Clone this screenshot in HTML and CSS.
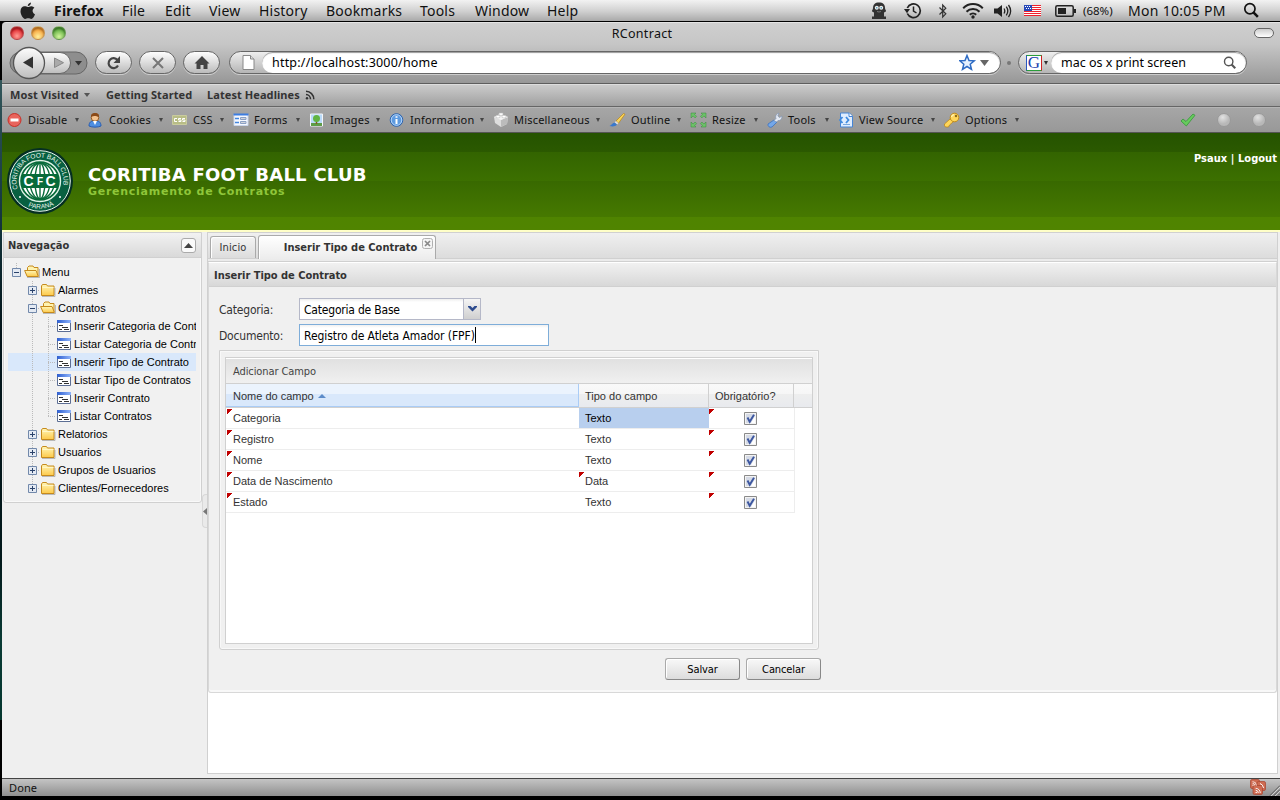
FILE: index.html
```html
<!DOCTYPE html>
<html lang="pt-BR">
<head>
<meta charset="utf-8">
<title>RContract</title>
<link rel="stylesheet" href="styles.css">
</head>
<body>
<svg class="defs" width="0" height="0" aria-hidden="true">
  <defs>
    <linearGradient id="gold" x1="0" y1="0" x2="0" y2="1"><stop offset="0" stop-color="#fff7b8"/><stop offset="1" stop-color="#fdc94a"/></linearGradient>
    <linearGradient id="silver" x1="0" y1="0" x2="0" y2="1"><stop offset="0" stop-color="#fdfdfd"/><stop offset="1" stop-color="#bdbdbd"/></linearGradient>
    <linearGradient id="bluebar" x1="0" y1="0" x2="1" y2="0"><stop offset="0" stop-color="#2f5fd0"/><stop offset="1" stop-color="#8fb4fa"/></linearGradient>
    <symbol id="folder" viewBox="0 0 16 18"><path d="M1.500 14.500V5l1-1.500h4l1 1.500h6.500v9.500z" fill="url(#gold)" stroke="#c68a1c"/><path d="M2.500 6.500h11" stroke="#fff6c8"/><path d="M2 15.500h13V7" fill="none" stroke="#8888" /></symbol>
    <symbol id="folder-open" viewBox="0 0 16 18"><path d="M3.500 13V4.500L5 3h4l1 1.500h4V13z" fill="#fff3b0" stroke="#c68a1c"/><path d="M.6 7.500h11.400l2.400 6H3.200z" fill="url(#gold)" stroke="#c68a1c"/><path d="M3 14.500h12.500V6" fill="none" stroke="#8888"/></symbol>
    <symbol id="leaf" viewBox="0 0 16 18"><path d="M1.500 3.500h13v11h-13z" fill="#fff" stroke="#5c6e94"/><path d="M1 3h14v3H1z" fill="url(#bluebar)"/><path d="M3 8.500h4M6 10.500h6M3 12.500h3M8 12.500h5" stroke="#333"/></symbol>
    <symbol id="plus" viewBox="0 0 9 9"><path d="M.5.5h8v8h-8z" fill="#e4eaf3" stroke="#7289ab"/><path d="M2 4.500h5M4.500 2v5" stroke="#2b436b"/></symbol>
    <symbol id="minus" viewBox="0 0 9 9"><path d="M.5.5h8v8h-8z" fill="#e4eaf3" stroke="#7289ab"/><path d="M2 4.500h5" stroke="#2b436b"/></symbol>
    <symbol id="check" viewBox="0 0 13 13"><path d="M.5.5h12v12H.5z" fill="#f3f3f3" stroke="#8a8a8a"/><path d="M2 2h9v9H2z" fill="#d5dae5"/><path d="M7 11h4V4z" fill="#fff"/><path d="M3.500 5.500l2.200 4.300L10 2.800" fill="none" stroke="#3d57a0" stroke-width="1.900"/></symbol>
    <symbol id="feed" viewBox="0 0 10 10"><path d="M1 1.200a8 8 0 0 1 7.800 8M1 4.500a4.700 4.700 0 0 1 4.500 4.700" fill="none" stroke="currentColor" stroke-width="1.500"/><circle cx="2" cy="8.300" r="1.200" fill="currentColor"/></symbol>
    <symbol id="lens" viewBox="0 0 16 16"><circle cx="6.500" cy="6.300" r="4.800" fill="none" stroke="currentColor" stroke-width="1.600"/><path d="M9.800 9.800l4.200 4.200" stroke="currentColor" stroke-width="2.400"/></symbol>
    <radialGradient id="ball" cx=".4" cy=".3"><stop offset="0" stop-color="#e2e2e2"/><stop offset="1" stop-color="#b8b8b8"/></radialGradient>
  </defs>
</svg>

<div class="screen">
  <header class="menubar">
    <svg class="apple" width="16" height="18" viewBox="0 0 16 18"><path d="M11 .5c.1 2-1.500 3.600-3.200 3.500C7.600 2.300 9.300.7 11 .5zM8 5c.8 0 1.800-.9 3.400-.8 1.200.1 2.300.6 3 1.600-2.700 1.700-2.200 5.300.6 6.400-.8 2.300-2.200 4.700-3.700 4.700-1.200 0-1.600-.7-3.100-.7s-1.900.7-3 .7C3 17 .5 12.600.5 9.300c0-3.300 2-5 4-5C6 4.300 7.100 5 8 5z" fill="#222"/></svg>
    <nav class="menus">
      <b class="m1">Firefox</b><span class="m2">File</span><span class="m3">Edit</span><span class="m4">View</span><span class="m5">History</span><span class="m6">Bookmarks</span><span class="m7">Tools</span><span class="m8">Window</span><span class="m9">Help</span>
    </nav>
    <div class="extras">
      <svg class="e1" width="18" height="19" viewBox="0 0 18 18"><path d="M9 1C5 1 3 3 3 6.500c0 1.500-1 2-1 3s1.500 1 2 1.500V15H2v2.500h14V15h-2v-4c.5-.5 2-.5 2-1.500s-1-1.500-1-3C15 3 13 1 9 1z" fill="#333"/><circle cx="6.800" cy="6.300" r="2" fill="#eee"/><circle cx="11.200" cy="6.300" r="2" fill="#eee"/><path d="M6.800 5.500v1.500M11.200 5.500v1.500" stroke="#28a" /><path d="M7 10q2 1 4 0" stroke="#777" fill="none"/></svg>
      <svg class="e2" width="18" height="18" viewBox="0 0 18 18"><path d="M3.300 11.500A6.800 6.800 0 1 0 3.300 6" fill="none" stroke="#222" stroke-width="1.700"/><path d="M0 7h6L3 11.300z" fill="#222"/><path d="M9.500 4.500V9l3 2" fill="none" stroke="#222" stroke-width="1.500"/></svg>
      <svg class="e3" width="10" height="16" viewBox="0 0 10 16"><path d="M1.500 4.500l6.300 6.300L4.700 14V2l3.100 3.200-6.300 6.300" fill="none" stroke="#333" stroke-width="1.200"/></svg>
      <svg class="e4" width="22" height="17" viewBox="0 0 22 17"><path d="M1.200 6.200a13.800 13.800 0 0 1 19.600 0M4.500 9.700a9.200 9.200 0 0 1 13 0M7.800 12.800a4.600 4.600 0 0 1 6.400 0" fill="none" stroke="#222" stroke-width="2"/><circle cx="11" cy="15" r="1.700" fill="#222"/></svg>
      <svg class="e5" width="18" height="14" viewBox="0 0 18 14"><path d="M0 4.500h3.500L8 1v12L3.500 9.500H0z" fill="#222"/><path d="M10 4.500q1.600 2.500 0 5M12.300 2.700q3 4.300 0 8.600M14.500 1q4.300 6 0 12" fill="none" stroke="#222" stroke-width="1.300"/></svg>
      <svg class="e6" width="17" height="11" viewBox="0 0 17 11" shape-rendering="crispEdges"><path d="M0 0h17v11H0z" fill="#fff"/><path d="M0 0h17v1H0zM0 2h17v1H0zM0 4h17v1H0zM0 6h17v1H0zM0 8h17v1H0zM0 10h17v1H0z" fill="#f0202c"/><path d="M0 0h8v6H0z" fill="#2648b8"/><path d="M1 1h1v1H1zM3 1h1v1H3zM5 1h1v1H5zM2 3h1v1H2zM4 3h1v1H4zM6 3h1v1H6z" fill="#fff"/></svg>
      <svg class="e7" width="21" height="12" viewBox="0 0 21 12"><rect x=".8" y=".8" width="17.400" height="10.400" rx="1.500" fill="none" stroke="#222" stroke-width="1.500"/><path d="M3 3h8v6H3z" fill="#222"/><path d="M20 4v4" stroke="#222" stroke-width="2"/></svg>
      <span class="pct">(68%)</span>
      <span class="clock">Mon 10:05 PM</span>
      <svg class="e8" width="17" height="17"><use href="#lens"/></svg>
    </div>
  </header>

  <div class="window">
    <div class="chrome">
      <div class="titlebar">
        <div class="lights"><i class="red"></i><i class="amber"></i><i class="green"></i></div>
        <div class="title">RContract</div>
        <i class="pill"></i>
      </div>
      <div class="navbar">
        <svg class="keyhole" width="80" height="34" viewBox="0 0 80 34">
          <rect x="1" y="6" width="77" height="22" rx="11" fill="#8e8e8e" stroke="#666"/>
          <path d="M20 6.500h31a10.500 10.500 0 0 1 0 21H20z" fill="url(#silver)" stroke="#666"/>
          <circle cx="20" cy="17" r="15.500" fill="url(#silver)" stroke="#555" stroke-width="1.300"/>
          <path d="M14 16.500l10-6v12z" fill="#333"/><path d="M45.500 12v9.500l9-4.800z" fill="#aaa" stroke="#888"/><path d="M66 15h7l-3.500 4.500z" fill="#333"/>
        </svg>
        <span class="btn"><svg width="16" height="16" viewBox="0 0 16 16"><path d="M12 10.500A5 5 0 1 1 11.500 5" fill="none" stroke="#444" stroke-width="2.200"/><path d="M14 1v7H7.500z" fill="#444"/></svg></span>
        <span class="btn"><svg width="16" height="16" viewBox="0 0 16 16"><path d="M3 3l10 10M13 3L3 13" stroke="#777" stroke-width="2"/></svg></span>
        <span class="btn"><svg width="16" height="16" viewBox="0 0 16 16"><path d="M8 1L.5 8.500h2V14h4v-4h3v4h4V8.500h2z" fill="#444"/></svg></span>
        <div class="url">
          <span class="page"><svg width="13" height="15" viewBox="0 0 13 15"><path d="M1 .5h7.500L12 4v10.500H1z" fill="#fff" stroke="#888"/><path d="M8.500.5V4H12" fill="#ddd" stroke="#888"/></svg></span>
          <span class="field"><span class="address">http://localhost:3000/home</span>
            <svg width="32" height="17" viewBox="0 0 32 17"><path d="M8 1.500l2 5 5.200.3-4 3.400 1.300 5.100L8 12.500l-4.500 2.800 1.300-5.100-4-3.400L6 6.500z" fill="#e5f1ff" stroke="#2f6cc4" stroke-width="1.500"/><path d="M21 6h9l-4.500 6z" fill="#666"/></svg></span>
        </div>
        <i class="dot"></i>
        <div class="search">
          <span class="engine"><b>G</b><i class="caret"></i></span>
          <span class="field"><span class="query">mac os x print screen</span><svg width="14" height="14" viewBox="0 0 16 16"><use href="#lens"/></svg></span>
        </div>
      </div>
    </div>
    <div class="bookmarks">
      <span class="bk1">Most Visited</span><i class="caret wide"></i><span class="bk2">Getting Started</span><span class="bk3">Latest Headlines</span><svg width="10" height="10"><use href="#feed"/></svg>
    </div>
    <div class="devbar">
      <div class="dev d1"><svg width="16" height="16" viewBox="0 0 16 16"><circle cx="7.500" cy="8" r="6.500" fill="#e8645c" stroke="#c93028"/><path d="M3.500 6.500h8v3h-8z" fill="#fff"/></svg><span>Disable</span><i class="caret"></i></div>
      <div class="dev d2"><svg width="16" height="16" viewBox="0 0 16 16"><path d="M1 14c0-4 2.500-5.500 6-5.500s6 1.500 6 5.500c-3 1.500-9 1.500-12 0z" fill="#4e8ee0" stroke="#2a5db0"/><circle cx="7" cy="5.500" r="3.800" fill="#f3c28e" stroke="#935a20"/><path d="M3 5C2.500 2 5 .5 7.500 1 10 .5 11.500 3 11 5 9 4.500 8 4 7 4S4.500 4 3 5z" fill="#8a4a18"/><path d="M5 9l2 4 2-4z" fill="#fff"/></svg><span>Cookies</span><i class="caret"></i></div>
      <div class="dev d3"><svg width="16" height="16" viewBox="0 0 16 16"><path d="M.5 3.500h14v9H.5z" fill="#b8bd86" stroke="#c9cb9e"/><path d="M5 6.500H2.500v3H5M9 6.500H6.500v1.500H9v1.500H6.500M13 6.500h-2.500v1.500H13v1.500h-2.500" fill="none" stroke="#fff"/></svg><span>CSS</span><i class="caret"></i></div>
      <div class="dev d4"><svg width="16" height="16" viewBox="0 0 16 16"><path d="M1 2.500h14v11H1z" fill="#f5f8ff" stroke="#c8d4ea"/><path d="M.5 2.500h15" stroke="#3c7de0" stroke-width="2"/><path d="M2 6.500h4M2 10.500h4" stroke="#4386df" stroke-width="1.500"/><path d="M7.500 5.500H13v2H7.500zM7.500 9.500H13v2H7.500z" fill="#d0d4dc" stroke="#8ba0c4"/></svg><span>Forms</span><i class="caret"></i></div>
      <div class="dev d5"><svg width="16" height="16" viewBox="0 0 16 16"><path d="M1.500 2h12v12h-12z" fill="#b9daf9" stroke="#f4f6fa"/><path d="M2 11h11v3H2z" fill="#5e9c46"/><path d="M7.500 8v4" stroke="#845820" stroke-width="1.500"/><circle cx="7.500" cy="6.500" r="3.500" fill="#61b442"/></svg><span>Images</span><i class="caret"></i></div>
      <div class="dev d6"><svg width="16" height="16" viewBox="0 0 16 16"><circle cx="7.500" cy="8" r="6.300" fill="#5d9ae0" stroke="#2b62ae"/><circle cx="7.500" cy="8" r="5.300" fill="none" stroke="#b5d5f8"/><path d="M7.500 7v5M7.500 4.300v1.500" stroke="#fff" stroke-width="2"/></svg><span>Information</span><i class="caret"></i></div>
      <div class="dev d7"><svg width="16" height="16" viewBox="0 0 16 16"><path d="M1 5l6-3 8 3-1 7-6 3-6-4z" fill="#ddd"/><path d="M8 8l7-3-1 7-6 3z" fill="#bbb"/><path d="M1 5l7 3 7-3-8-3z" fill="#f4f4f4"/><path d="M3 3.500v2l2 .5 2-.5v-2zM9 3.500v2l2 .5 2-.5v-2zM6 1v2l2 .5L10 3V1z" fill="#fff" stroke="#bbb" stroke-width=".6"/></svg><span>Miscellaneous</span><i class="caret"></i></div>
      <div class="dev d8"><svg width="17" height="16" viewBox="0 0 17 16"><path d="M7 9l7.500-7.500 1.500.7-6.500 9z" fill="#f8d45b" stroke="#b98312" stroke-width=".7"/><path d="M7 9l2.500 2.200L8 12.500 5.500 10.500z" fill="#ddd"/><path d="M5.500 10.500L8 12.600C6 15 3 14.500.5 14c2-.5 2.500-3 5-3.500z" fill="#3978cd"/></svg><span>Outline</span><i class="caret"></i></div>
      <div class="dev d9"><svg width="17" height="16" viewBox="0 0 17 16"><path d="M1 1h5L4.600 2.400l2 2-1.500 1.500-2-2L1 6zM16 1h-5l1.400 1.400-2 2 1.500 1.500 2-2L16 6zM1 15h5l-1.400-1.400 2-2L5.100 10l-2 2L1 10zM16 15h-5l1.400-1.400-2-2 1.500-1.600 2 2L16 10z" fill="#6cc268" stroke="#388a3c" stroke-width=".5"/></svg><span>Resize</span><i class="caret"></i></div>
      <div class="dev d10"><svg width="16" height="16" viewBox="0 0 16 16"><path d="M7 8l3 2-5 5c-2 1-4.500-.5-4-3z" fill="#74a7e8" stroke="#3d72be" stroke-width=".8"/><path d="M7 8.500l2-2C8 4 9.500 1.500 12 1.200L10.800 4l1.700 1.500L15 4c.3 3-2 5-4 4.500L9.500 10z" fill="#e4e9f2" stroke="#8094b2" stroke-width=".7"/></svg><span>Tools</span><i class="caret"></i></div>
      <div class="dev d11"><svg width="16" height="16" viewBox="0 0 16 16"><path d="M2.500 1h9L14.500 4v11h-12z" fill="#dfedff" stroke="#4585d6"/><path d="M11 1v3.500h3.500" fill="#fff" stroke="#4585d6"/><path d="M4.500 5L2 8l2.500 3M8 5l2.500 3L8 11" fill="none" stroke="#3f8be0" stroke-width="1.800"/><path d="M5 12.500h7" stroke="#77a7df"/></svg><span>View Source</span><i class="caret"></i></div>
      <div class="dev d12"><svg width="16" height="16" viewBox="0 0 16 16"><path d="M8 8l1.500 1.500-4 3.500-1 2H1.500l-1-1.500V12L6 7z" fill="#ffd65a" stroke="#bb820f" stroke-width=".7"/><circle cx="10.500" cy="5.500" r="4.300" fill="#ffd65a" stroke="#c08a1c"/><circle cx="12" cy="4" r="1.200" fill="#8b6a1c"/><path d="M7.500 5a3 3 0 0 1 2.500-2.300" stroke="#fff6bd" fill="none" stroke-width="1.300"/></svg><span>Options</span><i class="caret"></i></div>
      <div class="status-icons">
        <svg width="16" height="14" viewBox="0 0 16 14"><path d="M1 8l2-2 3 2.500L13 1l2 1.300L6.300 13z" fill="#67cb5d" stroke="#35973a" stroke-width=".8"/></svg>
        <svg width="14" height="14"><circle cx="7" cy="7" r="6.500" fill="url(#ball)" stroke="#999"/></svg>
        <svg width="14" height="14"><circle cx="7" cy="7" r="6.500" fill="url(#ball)" stroke="#999"/></svg>
      </div>
    </div>

    <div class="brand">
      <svg class="logo" width="66" height="66" viewBox="0 0 66 66">
        <defs><path id="arc-top" d="M10.900 41A23.500 23.500 0 1 1 55.100 41"/><path id="arc-bottom" d="M18.500 56.700A27.800 27.800 0 0 0 47.500 56.700"/>
        <clipPath id="globe"><path d="M0 0h66v26H0zM0 40h66v26H0z"/></clipPath></defs>
        <circle cx="33" cy="33" r="33" fill="#052f22"/><circle cx="33" cy="33" r="30.300" fill="#086041" stroke="#e9f5ee" stroke-width="1"/>
        <circle cx="33" cy="33" r="20.500" fill="#076b3a" stroke="#dff2e6" stroke-width="1.400"/>
        <g clip-path="url(#globe)"><circle cx="33" cy="33" r="18" fill="#fff"/><g fill="none" stroke="#076b3a" stroke-width="1.400"><path d="M33 14v38"/><ellipse cx="33" cy="33" rx="5" ry="18"/><ellipse cx="33" cy="33" rx="10" ry="18"/><ellipse cx="33" cy="33" rx="14.500" ry="18"/></g></g>
        <text x="16.500" y="38" class="cfc">C</text><text x="29.900" y="36.800" class="cfc small">F</text><text x="38.500" y="38" class="cfc">C</text>
        <text class="ring" textLength="86"><textPath href="#arc-top">CORITIBA FOOT BALL CLUB</textPath></text>
        <text class="ring"><textPath href="#arc-bottom" startOffset="3">PARANÁ</textPath></text>
        <circle cx="13" cy="49" r="1" fill="#fff"/><circle cx="53" cy="49" r="1" fill="#fff"/>
      </svg>
      <div class="names"><div class="club">CORITIBA FOOT BALL CLUB</div><div class="sub">Gerenciamento de Contratos</div></div>
      <div class="user">Psaux | Logout</div>
    </div>

    <main class="workspace">
      <aside class="side">
        <section class="nav-panel">
          <div class="panel-head"><span>Navegação</span><i class="collapse"><svg width="9" height="5"><path d="M0 5l4.500-5L9 5z" fill="#444"/></svg></i></div>
          <ul class="tree">
            <li><i class="cell half"><svg width="9" height="9"><use href="#minus"/></svg></i><svg width="16" height="18"><use href="#folder-open"/></svg><span>Menu</span></li>
            <li><i class="cell"></i><i class="cell line elbow"><svg width="9" height="9"><use href="#plus"/></svg></i><svg width="16" height="18"><use href="#folder"/></svg><span>Alarmes</span></li>
            <li><i class="cell"></i><i class="cell line elbow"><svg width="9" height="9"><use href="#minus"/></svg></i><svg width="16" height="18"><use href="#folder-open"/></svg><span>Contratos</span></li>
            <li><i class="cell"></i><i class="cell line"></i><i class="cell line elbow"></i><svg width="16" height="18"><use href="#leaf"/></svg><span>Inserir Categoria de Contrato</span></li>
            <li><i class="cell"></i><i class="cell line"></i><i class="cell line elbow"></i><svg width="16" height="18"><use href="#leaf"/></svg><span>Listar Categoria de Contratos</span></li>
            <li class="selected"><i class="cell"></i><i class="cell line"></i><i class="cell line elbow"></i><svg width="16" height="18"><use href="#leaf"/></svg><span>Inserir Tipo de Contrato</span></li>
            <li><i class="cell"></i><i class="cell line"></i><i class="cell line elbow"></i><svg width="16" height="18"><use href="#leaf"/></svg><span>Listar Tipo de Contratos</span></li>
            <li><i class="cell"></i><i class="cell line"></i><i class="cell line elbow"></i><svg width="16" height="18"><use href="#leaf"/></svg><span>Inserir Contrato</span></li>
            <li><i class="cell"></i><i class="cell line"></i><i class="cell half elbow"></i><svg width="16" height="18"><use href="#leaf"/></svg><span>Listar Contratos</span></li>
            <li><i class="cell"></i><i class="cell line elbow"><svg width="9" height="9"><use href="#plus"/></svg></i><svg width="16" height="18"><use href="#folder"/></svg><span>Relatorios</span></li>
            <li><i class="cell"></i><i class="cell line elbow"><svg width="9" height="9"><use href="#plus"/></svg></i><svg width="16" height="18"><use href="#folder"/></svg><span>Usuarios</span></li>
            <li><i class="cell"></i><i class="cell line elbow"><svg width="9" height="9"><use href="#plus"/></svg></i><svg width="16" height="18"><use href="#folder"/></svg><span>Grupos de Usuarios</span></li>
            <li><i class="cell"></i><i class="cell half elbow"><svg width="9" height="9"><use href="#plus"/></svg></i><svg width="16" height="18"><use href="#folder"/></svg><span>Clientes/Fornecedores</span></li>
          </ul>
        </section>
      </aside>
      <div class="splitter"><i class="grip"><svg width="4" height="7"><path d="M4 0v7L0 3.500z" fill="#777"/></svg></i></div>
      <section class="tabs">
        <div class="strip">
          <div class="tab idle">Inicio</div>
          <div class="tab active"><span>Inserir Tipo de Contrato</span><svg class="close" width="11" height="11" viewBox="0 0 11 11"><rect x=".5" y=".5" width="10" height="10" rx="2" fill="#f4f4f4" stroke="#b0b0b0"/><path d="M3 3l5 5M8 3L3 8" stroke="#888" stroke-width="1.700"/></svg></div>
        </div>
        <div class="spacer"></div>
        <div class="content">
          <div class="content-head">Inserir Tipo de Contrato</div>
          <form class="form">
            <div class="row"><label>Categoria:</label><div class="combo"><span>Categoria de Base</span><i><svg width="9" height="6" viewBox="0 0 9 6"><path d="M0 0h2.500l2 2 2-2H9v1L4.500 5.500 0 1z" fill="#2d4b8e"/></svg></i></div></div>
            <div class="row"><label>Documento:</label><div class="input"><span>Registro de Atleta Amador (FPF)</span><i></i></div></div>
            <div class="frame">
              <div class="grid">
                <div class="toolbar">Adicionar Campo</div>
                <div class="grid-head"><div class="c1">Nome do campo<svg width="8" height="4"><path d="M0 4l4-4 4 4z" fill="#5d8cc9"/></svg></div><div class="c2">Tipo do campo</div><div class="c3">Obrigatório?</div><div class="c4"></div></div>
                <div class="record"><div class="c1 dirty">Categoria</div><div class="c2 picked">Texto</div><div class="c3 dirty"><svg width="13" height="13"><use href="#check"/></svg></div></div>
                <div class="record"><div class="c1 dirty">Registro</div><div class="c2">Texto</div><div class="c3 dirty"><svg width="13" height="13"><use href="#check"/></svg></div></div>
                <div class="record"><div class="c1 dirty">Nome</div><div class="c2">Texto</div><div class="c3 dirty"><svg width="13" height="13"><use href="#check"/></svg></div></div>
                <div class="record"><div class="c1 dirty">Data de Nascimento</div><div class="c2 dirty">Data</div><div class="c3 dirty"><svg width="13" height="13"><use href="#check"/></svg></div></div>
                <div class="record"><div class="c1 dirty">Estado</div><div class="c2">Texto</div><div class="c3 dirty"><svg width="13" height="13"><use href="#check"/></svg></div></div>
              </div>
            </div>
            <div class="actions"><button type="button">Salvar</button><button type="button">Cancelar</button></div>
          </form>
        </div>
      </section>
    </main>
    <footer class="statusbar"><span>Done</span>
      <svg width="32" height="17" viewBox="0 0 32 17"><g stroke="#a8442e" stroke-width=".7"><rect x="2.500" y=".5" width="9" height="9" rx="1.500" fill="#cf6c52"/><rect x="9" y="2.500" width="8.500" height="9" rx="1.500" fill="#cf6c52"/><rect x="5" y="6.500" width="9.500" height="9" rx="1.500" fill="#cf6c52"/></g><g color="#fff"><use href="#feed" x="4" y="2" width="5" height="5"/><use href="#feed" x="7" y="8.500" width="6" height="6"/></g><path d="M12 4.500q3 1 3.500 4.500" stroke="#fff" fill="none"/><path d="M22 16.500L32 6.500M26 16.500l6-6M30 16.500l2-2" stroke="#555"/><path d="M23 17L32 8M27 17l5-5" stroke="#ddd" stroke-width=".8"/></svg>
    </footer>
  </div>
</div>
</body>
</html>
```
FILE: styles.css
```css
* { box-sizing: border-box; }
body { margin: 0; background: #000; overflow: hidden; }
.defs { position: absolute; }
svg { display: block; flex: none; }
i { font-style: normal; }

.screen {
  width: 1280px; height: 800px; display: flex; flex-direction: column;
  background: linear-gradient(#000 80px, #32565a 80px, #173b42 200px, #04151b 330px, #03191b 560px, #0a3b35 640px, #05372f 720px, #000 720px);
  font-family: "Noto Sans", "Open Sans", sans-serif; color: #111; white-space: nowrap;
}

/* system menu bar */
.menubar { height: 22px; display: flex; align-items: center; border-bottom: 1px solid #000; background: linear-gradient(#f2f2f2, #cfcfcf 55%, #a9a9a9); font-size: 14px; line-height: 21px; }
.apple { margin-left: 20px; }
.menus { display: flex; margin-left: 18px; width: 800px; }
.m1 { width: 68px; } .m2 { width: 43px; } .m3 { width: 44px; } .m4 { width: 50px; } .m5 { width: 67px; } .m6 { width: 94px; } .m7 { width: 55px; } .m8 { width: 72px; }
.m1 { letter-spacing: .2px; }
.menus span { letter-spacing: .2px; }
.extras { display: flex; align-items: center; margin-left: 16px; height: 21px; }
.e2 { margin-left: 16px; } .e3 { margin-left: 16px; } .e4 { margin-left: 14px; } .e5 { margin-left: 10px; } .e6 { margin-left: 12px; } .e7 { margin-left: 14px; }
.pct { width: 45px; margin-left: 7px; font-size: 11.500px; }
.clock { width: 115px; letter-spacing: .3px; }

.window { flex: none; height: 774px; margin-left: 2px; display: flex; flex-direction: column; }
.chrome { height: 62px; background: linear-gradient(#cfcfcf, #c6c6c6 35%, #979797); border-top: 1px solid #e4e4e4; border-bottom: 1px solid #5e5e5e; border-top-left-radius: 4px; }
.titlebar { height: 20px; display: flex; align-items: center; justify-content: space-between; padding: 0 6px 0 8px; }
.lights { display: flex; gap: 7px; width: 80px; }
.lights i { width: 14px; height: 14px; border-radius: 50%; border: 1px solid #6665; box-shadow: inset 0 2px 2px #0005; }
.red { background: radial-gradient(circle at 50% 75%, #ff9d94, #e3292f 65%); }
.amber { background: radial-gradient(circle at 50% 80%, #ffef9b, #f59a31 70%); }
.green { background: radial-gradient(circle at 50% 80%, #d2f59b, #57a93a 70%); }
.title { font-size: 12.500px; letter-spacing: .3px; }
.pill { width: 20px; height: 10px; border: 1px solid #666; border-radius: 5px; background: linear-gradient(#ccc, #fff); margin-left: 60px; }

.navbar { height: 39px; display: flex; align-items: center; padding-left: 7px; }
.keyhole { margin-right: 6px; }
.btn { width: 37px; height: 23px; margin-right: 7px; display: flex; align-items: center; justify-content: center; border: 1px solid #666; border-radius: 12px; background: linear-gradient(#fefefe, #bbb); box-shadow: 0 1px 0 #ccc; }
.url, .search { height: 23px; display: flex; border: 1px solid #666; border-radius: 12px; background: linear-gradient(#eee, #b5b5b5); box-shadow: 0 1px 0 #ccc; overflow: hidden; }
.url { width: 772px; margin-left: 2px; }
.page { width: 32px; padding: 3px 0 0 12px; }
.field { flex: 1; display: flex; align-items: center; justify-content: space-between; background: #fff; border-radius: 11px; padding: 0 9px 0 10px; font-size: 12.500px; color: #000; box-shadow: inset 0 1px 1px #999; }
.address { letter-spacing: .2px; }
.dot { width: 4px; height: 4px; border-radius: 2px; background: #777; margin: 0 7px 0 6px; }
.search { width: 229px; }
.search svg { color: #555; }
.engine { width: 32px; display: flex; align-items: center; padding-left: 7px; gap: 2px; }
.engine b { width: 16px; height: 16px; border: 1px solid #2a9d3a; border-left-color: #2a55c0; border-right-color: #c22; background: #fff; color: #1b3fae; font: 17px/14px "Liberation Serif", serif; text-align: center; }
.caret { border: 2.500px solid transparent; border-top: 4px solid #333; border-bottom: 0; }
.caret.wide { border-width: 4px 3.500px 0; border-top-color: #555; margin: 0 16px 0 0; }

.bookmarks { height: 23px; display: flex; align-items: center; padding: 0 0 2px 8px; border-top: 1px solid #ddd; border-bottom: 1px solid #666; background: linear-gradient(#cbcbcb, #a0a0a0); font-size: 11px; font-weight: 700; color: #333; letter-spacing: .08px; }
.bk1 { width: 74px; } .bk2 { width: 101px; } .bk3 { width: 98px; }

.devbar { height: 26px; display: flex; align-items: center; padding-left: 5px; background: linear-gradient(#a6a6a6, #989898); border-top: 1px solid #b5b5b5; border-bottom: 1px solid #555; font-size: 11px; letter-spacing: .2px; }
.dev { display: flex; align-items: center; gap: 5px; padding-right: 9px; }
.dev span { margin-top: -2px; }
.dev .caret { margin-left: auto; border-top-color: #444; }
.d1 { width: 81px; } .d2 { width: 84px; } .d3 { width: 61px; } .d4 { width: 76px; } .d5 { width: 80px; } .d6 { width: 104px; } .d7 { width: 116px; } .d8 { width: 81px; } .d9 { width: 77px; } .d10 { width: 71px; } .d11 { width: 106px; } .d12 { width: 84px; }
.status-icons { display: flex; align-items: center; margin-left: auto; padding-right: 14px; gap: 21px; }

/* application header */
.brand { height: 99px; display: flex; align-items: flex-start; border-bottom: 2px solid #ffffc8; padding: 0 3px 0 5px; font-family: "DejaVu Sans", sans-serif; font-weight: 700; color: #fff; background: linear-gradient(#255300, #2b5900 19px, #336400 19px, #3c7000 48px, #386900 48px, #467900 84px, #4f8400 84px, #508400); }
.logo { margin-top: 15px; }
.cfc { font: 700 14px "Liberation Sans", sans-serif; fill: #fff; }
.cfc.small { font-size: 10px; }
.ring { font: 6.600px "Liberation Sans", sans-serif; fill: #e6f5eb; }
.names { margin: 32px 0 0 15px; }
.club { font-size: 18px; line-height: 20px; letter-spacing: .27px; }
.sub { font-size: 11px; line-height: 13px; letter-spacing: .73px; color: #8fc63a; }
.user { margin: 18px 0 0 auto; font: 700 11px/15px "DejaVu Sans Condensed", "DejaVu Sans", sans-serif; letter-spacing: .05px; }

/* workspace */
.workspace { flex: 1; display: flex; background: #efefef; font-family: "Liberation Sans", Arial, sans-serif; font-size: 11px; }
.side { width: 200px; padding-left: 1px; }
.nav-panel { height: 271px; border: 1px solid #d0d0d0; border-radius: 0 0 3px 3px; background: #f1f1f1; box-shadow: inset 0 0 0 1px #f9f9f9; }
.panel-head { height: 25px; display: flex; align-items: center; justify-content: space-between; padding: 0 5px 0 4px; border-bottom: 1px solid #d0d0d0; background: linear-gradient(#f2f2f2, #d9d9d9); font: 700 11px "DejaVu Sans Condensed", "DejaVu Sans", sans-serif; color: #333; }
.collapse { width: 15px; height: 15px; border: 1px solid #aaa; border-radius: 3px; background: #fafafa; display: flex; align-items: center; justify-content: center; }
.tree { list-style: none; margin: 5px 5px 0 4px; padding: 0; overflow: hidden; color: #000; }
.tree li { height: 18px; display: flex; align-items: center; }
.tree span { margin-left: 2px; }
.tree .selected { background: #d9e8fb; }
.cell { flex: none; width: 16px; height: 18px; display: flex; align-items: center; justify-content: center; background-repeat: no-repeat; padding-left: 1px; }
.line { background-image: repeating-linear-gradient(#bbb 0 1px, transparent 1px 2px); background-size: 1px 18px; background-position: 8px 0; }
.half { background-image: repeating-linear-gradient(#bbb 0 1px, transparent 1px 2px); background-size: 1px 9px; background-position: 8px 0; }
.line.elbow { background-image: repeating-linear-gradient(#bbb 0 1px, transparent 1px 2px), repeating-linear-gradient(90deg, #bbb 0 1px, transparent 1px 2px); background-size: 1px 18px, 8px 1px; background-position: 8px 0, 8px 9px; }
.half.elbow { background-image: repeating-linear-gradient(#bbb 0 1px, transparent 1px 2px), repeating-linear-gradient(90deg, #bbb 0 1px, transparent 1px 2px); background-size: 1px 9px, 8px 1px; background-position: 8px 0, 8px 9px; }
.splitter { width: 5px; padding-top: 262px; }
.grip { display: flex; align-items: center; height: 34px; padding-left: 0; border: 1px solid #d8d8d8; border-right: 0; border-radius: 4px 0 0 4px; background: #eaeaea; }

.tabs { width: 1071px; height: 542px; border: 1px solid #d0d0d0; background: #fff; font-family: "DejaVu Sans Condensed", "DejaVu Sans", sans-serif; color: #333; }
.strip { height: 26px; display: flex; align-items: flex-end; gap: 2px; padding-left: 2px; border-bottom: 1px solid #d0d0d0; background: linear-gradient(#f0f0f0, #dcdcdc); }
.tab { border: 1px solid #aaa; border-bottom: 0; border-radius: 3px 3px 0 0; box-shadow: inset 1px 1px 0 #fff; text-align: center; }
.idle { width: 46px; height: 22px; line-height: 21px; letter-spacing: .15px; background: linear-gradient(#f4f4f4, #dcdcdc); }
.active { position: relative; width: 178px; height: 24px; margin-bottom: -1px; line-height: 23px; background: linear-gradient(#fff, #ececec); font-weight: 700; padding-left: 7px; }
.close { position: absolute; right: 2px; top: 2px; }
.spacer { height: 3px; background: #ebebeb; border-bottom: 1px solid #d0d0d0; }
.content { height: 431px; border: 1px solid #d8d8d8; border-top-color: #fff; border-radius: 0 0 3px 3px; background: #f0f0f0; box-shadow: inset 0 -2px 0 #f8f8f8; }
.content-head { height: 24px; padding-left: 5px; line-height: 25px; font-weight: 700; letter-spacing: -.03px; border-bottom: 1px solid #d0d0d0; background: linear-gradient(#f1f1f1, #d8d8d8); }
.form { padding: 11px 0 0 10px; }
.row { height: 22px; display: flex; align-items: center; margin-bottom: 4px; font-size: 12px; letter-spacing: -.2px; }
.row label { width: 80px; padding-top: 2px; }
.combo { width: 182px; height: 22px; display: flex; border: 1px solid #b5b8c8; background: linear-gradient(#eee, #fff 3px); color: #000; }
.combo span { flex: 1; padding: 1px 0 0 4px; line-height: 21px; }
.combo i { width: 17px; border-left: 1px solid #b5b8c8; background: linear-gradient(#f5f5f5, #cfcfcf); display: flex; align-items: center; justify-content: center; }
.input { width: 250px; height: 22px; display: flex; align-items: center; padding-left: 4px; border: 1px solid #7eadd9; background: linear-gradient(#f0f0f0, #fff 3px); color: #000; letter-spacing: -.07px; }
.input span { padding-top: 1px; }
.input i { width: 1px; height: 16px; background: #000; }
.frame { width: 600px; height: 300px; padding: 6px 5px 5px; border: 1px solid #d0d0d0; border-radius: 0 0 3px 3px; box-shadow: inset 0 0 0 1px #f8f8f8; }
.grid { width: 588px; height: 287px; border: 1px solid #d0d0d0; background: #fff; font-family: "Liberation Sans", Arial, sans-serif; font-size: 11px; }
.toolbar { height: 26px; padding-left: 7px; line-height: 28px; letter-spacing: -.1px; border-bottom: 1px solid #d0d0d0; box-shadow: inset 0 1px 0 #fff; background: linear-gradient(#e0e0e0, #f0f0f0); font-family: "DejaVu Sans Condensed", "DejaVu Sans", sans-serif; color: #444; }
.grid-head { height: 24px; display: flex; line-height: 24px; border-bottom: 1px solid #d0d0d0; background: linear-gradient(#f9f9f9, #f6f6f6 10px, #eee 10px, #e8eaee); }
.grid-head > div { border-right: 1px solid #d0d0d0; padding-left: 6px; }
.c1 { width: 353px; } .c2 { width: 130px; } .c3 { width: 85px; }
.grid-head .c1 { display: flex; align-items: center; gap: 4px; padding: 1px 0 0 7px; border-right-color: #aaccf6; border-bottom: 1px solid #aaccf6; background: linear-gradient(#ebf3fd 10px, #d9e8fb 10px); }
.grid-head .c4 { border: 0; }
.record { width: 569px; height: 21px; display: flex; border-bottom: 1px solid #ededed; border-right: 1px solid #ededed; line-height: 21px; }
.record .c1 { padding-left: 7px; } .record .c2 { padding-left: 6px; }
.record .c3 { display: flex; align-items: center; justify-content: center; padding: 1px 2px 0 0; }
.dirty { background: linear-gradient(135deg, #c00000 0 3.600px, transparent 3.600px) 0 1px no-repeat; }
.c1.dirty { background-position: 1px 1px; }
.picked { background: #b8cfee; color: #000; }
.actions { display: flex; gap: 6px; padding: 8px 0 0 446px; }
button { width: 75px; height: 22px; padding: 0; border: 1px solid #999; border-color: #aaa #888 #888 #aaa; border-radius: 3px; background: linear-gradient(#f8f8f8, #dcdcdc); box-shadow: inset 1px 1px 0 #fff; font: 11px "DejaVu Sans Condensed", "DejaVu Sans", sans-serif; color: #000; letter-spacing: -.1px; }

.statusbar { height: 18px; display: flex; align-items: center; justify-content: space-between; padding-left: 7px; border-top: 1px solid #444; background: linear-gradient(#c4c4c4, #8f8f8f); font-size: 11px; letter-spacing: .1px; }
```
